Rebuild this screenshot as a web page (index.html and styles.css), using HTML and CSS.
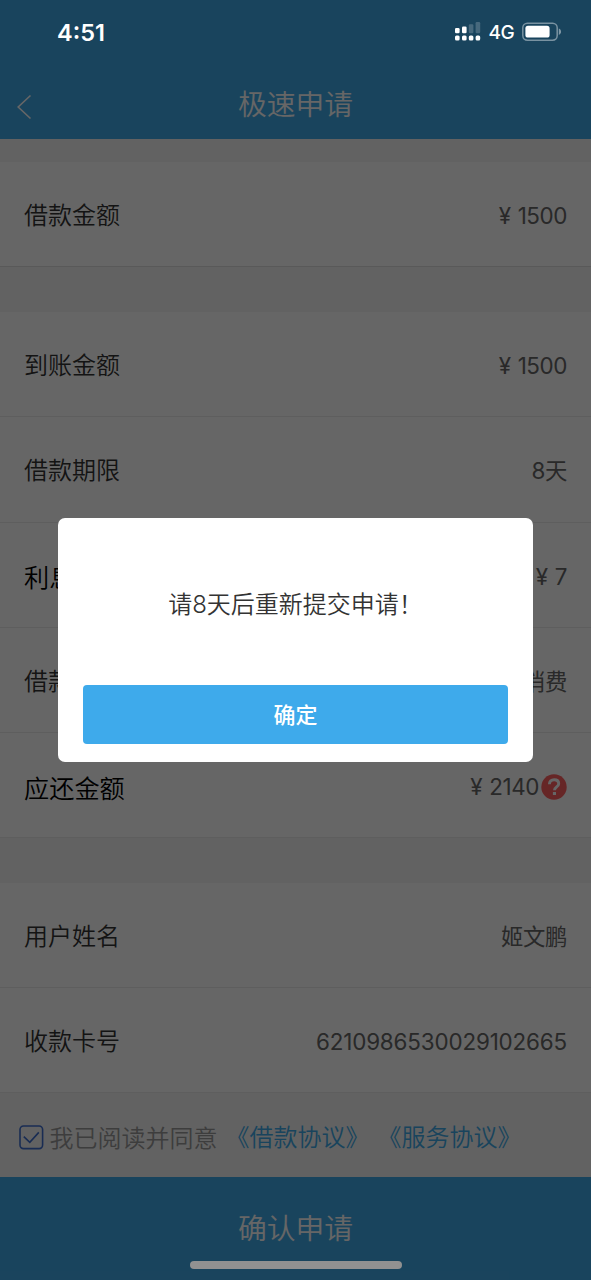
FILE: index.html
```html
<!DOCTYPE html>
<html lang="zh-CN">
<head>
<meta charset="utf-8">
<title>极速申请</title>
<link rel="stylesheet" href="styles.css">
</head>
<body>
<div class="screen">
  <header class="header">
    <div class="nav">
      <svg class="back" width="16" height="26" viewBox="0 0 16 26"><path d="M14.5 1.5 2.2 13l12.3 11.5" fill="none" stroke="#fff" stroke-width="1.6"/></svg>
      <h1 class="title">极速申请</h1>
    </div>
  </header>
  <main class="content">
    <section class="group">
      <div class="row row-last"><span class="label">借款金额</span><span class="value"><span class="yen">¥</span>1500</span></div>
    </section>
    <section class="group">
      <div class="row"><span class="label">到账金额</span><span class="value"><span class="yen">¥</span>1500</span></div>
      <div class="row"><span class="label">借款期限</span><span class="value">8天</span></div>
      <div class="row"><span class="label label-strong">利息</span><span class="value"><span class="yen">¥</span>7</span></div>
      <div class="row"><span class="label">借款用途</span><span class="value">消费</span></div>
      <div class="row row-end"><span class="label label-strong">应还金额</span><span class="value"><span class="yen">¥</span>2140<svg class="help" width="26" height="26" viewBox="0 0 26 26"><circle cx="13" cy="13" r="12.7" fill="#ff5f60"/><path d="M8.4 10.2c0-2.9 1.9-4.5 4.7-4.5s4.6 1.6 4.6 4c0 3.3-4.2 3.2-4.2 6.6" fill="none" stroke="#fff" stroke-width="2.9"/><rect x="11.9" y="18" width="3.1" height="3" fill="#fff"/></svg></span></div>
    </section>
    <section class="group">
      <div class="row"><span class="label">用户姓名</span><span class="value">姬文鹏</span></div>
      <div class="row row-end"><span class="label">收款卡号</span><span class="value card">6210986530029102665</span></div>
    </section>
    <div class="agreement">
      <svg class="check" width="25" height="25" viewBox="0 0 25 25"><rect x="1" y="1" width="22.6" height="22.6" rx="3.5" fill="none" stroke="#3f6fd0" stroke-width="1.6"/><path d="m4.8 11.6 6 5.8 9-10" fill="none" stroke="#3f6fd0" stroke-width="1.6"/></svg>
      <span class="agree-text">我已阅读并同意</span>
      <a class="link">《借款协议》</a>
      <a class="link">《服务协议》</a>
    </div>
  </main>
  <footer class="submit">确认申请</footer>
  <div class="mask">
    <div class="dialog">
      <p class="message">请8天后重新提交申请！</p>
      <button class="confirm">确定</button>
    </div>
  </div>
  <div class="status">
    <span class="time">4:51</span>
    <div class="indicators">
      <svg width="26" height="20" viewBox="0 0 26 20" fill="#fff"><rect x="0" y="6" width="4.6" height="5.2" rx="1.3"/><rect x="7" y="4.5" width="4.6" height="6.7" rx="1.3"/><g opacity=".2"><rect x="13.8" y="2.2" width="4.6" height="9" rx="1.2"/><rect x="20.6" y="0" width="4.6" height="11.2" rx="1.2"/></g><rect x="0" y="13.6" width="4.6" height="4.8" rx="1.5"/><rect x="7" y="13.6" width="4.6" height="4.8" rx="1.5"/><rect x="13.8" y="13.6" width="4.6" height="4.8" rx="1.5"/><rect x="20.6" y="13.6" width="4.6" height="4.8" rx="1.5"/></svg>
      <span class="net">4G</span>
      <svg width="40" height="20" viewBox="0 0 40 20"><rect x=".8" y="1.2" width="34.4" height="17" rx="4.6" fill="none" stroke="#fff" stroke-opacity=".42" stroke-width="1.5"/><rect x="3.4" y="3.8" width="24.2" height="11.8" rx="2.6" fill="#fff"/><path d="M36.8 6.5c3 1.2 3 5.2 0 6.4z" fill="#fff" fill-opacity=".45"/></svg>
    </div>
  </div>
  <div class="home-bar"></div>
</div>
</body>
</html>
```
FILE: styles.css
```css
* { box-sizing: border-box; }
body {
  margin: 0;
  background: #fff;
  font-family: Inter, "Noto Sans CJK SC", sans-serif;
}
.screen {
  position: relative;
  width: 591px;
  height: 1280px;
  overflow: hidden;
  display: flex;
  flex-direction: column;
  background: #f5f5f5;
}
.header {
  height: 139px;
  padding-top: 70px;
  background: #40aae8;
}
.nav {
  height: 69px;
  display: grid;
  grid-template-columns: 60px 1fr 60px;
  align-items: center;
}
.back { margin: 5px 0 0 16px; }
.title {
  margin: 0;
  font-size: 28.8px;
  line-height: 40px;
  font-weight: 350;
  text-align: center;
  color: #fff;
}
.content { flex: 1; padding-top: 23px; }
.group { margin-bottom: 45px; background: #fff; }
.group:nth-of-type(3) { margin-bottom: 0; }
.row {
  height: 105.3px;
  padding: 4px 24px 0;
  border-bottom: 1px solid #ececec;
  display: flex;
  align-items: center;
  justify-content: space-between;
}
.row-last { height: 105px; border-bottom-color: #dedede; }
.row-end { height: 104.7px; }
.label { font-size: 24px; line-height: 36px; font-weight: 350; color: #333; }
.label-strong { font-size: 25.2px; color: #000; padding-top: 3px; }
.value {
  display: flex;
  align-items: center;
  font-size: 22.4px;
  line-height: 36px;
  letter-spacing: -0.4px;
  color: #666;
}
.yen { margin-right: 7px; }
.card { letter-spacing: -0.15px; }
.help { margin-left: 2px; }
.agreement {
  height: 84px;
  padding: 5px 0 0 18.5px;
  display: flex;
  align-items: center;
}
.agree-text {
  margin-left: 6px;
  padding-top: 3px;
  font-size: 24px;
  line-height: 36px;
  font-weight: 350;
  color: #999;
}
.link {
  margin-left: 8px;
  padding-top: 1px;
  font-size: 24px;
  line-height: 36px;
  font-weight: 350;
  color: #40aae8;
}
.submit {
  height: 104px;
  background: #40aae8;
  font-size: 28.8px;
  line-height: 104px;
  font-weight: 350;
  text-align: center;
  color: #fff;
}
.mask {
  position: absolute;
  inset: 0;
  background: rgba(0, 0, 0, .6);
  display: flex;
  align-items: center;
  justify-content: center;
}
.dialog {
  width: 475px;
  height: 244px;
  padding: 0 25px 18px;
  border-radius: 7px;
  background: #fff;
  display: flex;
  flex-direction: column;
}
.message {
  flex: 1;
  margin: 0;
  padding-top: 1px;
  display: flex;
  align-items: center;
  justify-content: center;
  font-size: 24px;
  font-weight: 350;
  color: #333;
}
.confirm {
  height: 59px;
  padding: 0 0 4px;
  border: 0;
  border-radius: 4px;
  background: #3eaaeb;
  font: 500 22px "Noto Sans CJK SC", sans-serif;
  color: #fff;
}
.status {
  position: absolute;
  top: 0;
  left: 0;
  width: 591px;
  height: 64px;
  padding: 0 29px 0 57px;
  display: flex;
  align-items: center;
  justify-content: space-between;
  color: #fff;
}
.time { font-size: 23.5px; font-weight: 600; }
.indicators { display: flex; align-items: center; gap: 7.5px; }
.net { font-size: 19px; font-weight: 500; letter-spacing: -0.3px; }
.home-bar {
  position: absolute;
  left: 190px;
  bottom: 11.5px;
  width: 212px;
  height: 7.5px;
  border-radius: 4px;
  background: #919191;
}
```
